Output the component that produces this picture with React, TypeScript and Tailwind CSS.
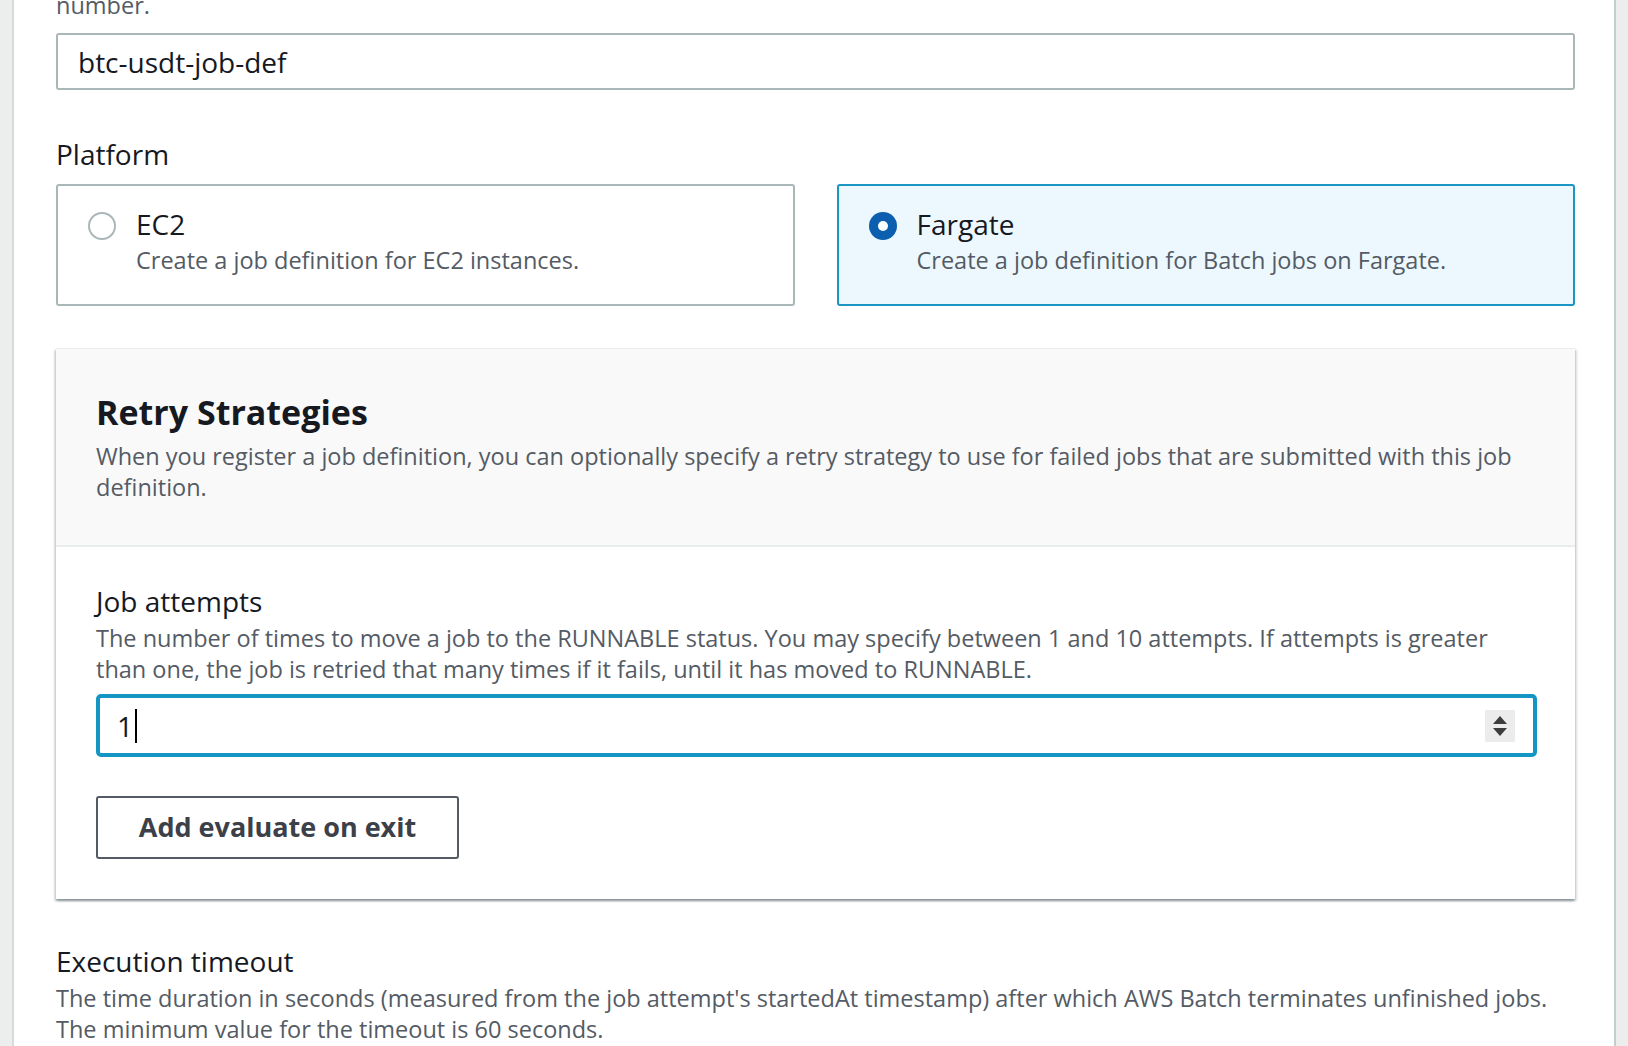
const font = { fontFamily: '"Open Sans", "Noto Sans", sans-serif' }

function Radio({ checked }: { checked: boolean }) {
  if (checked) {
    return (
      <span className="flex h-[28px] w-[28px] shrink-0 items-center justify-center rounded-full bg-[#0b5fae]">
        <span className="block h-[10px] w-[10px] rounded-full bg-white" />
      </span>
    )
  }
  return <span className="block h-[28px] w-[28px] shrink-0 rounded-full border-2 border-[#aab7b8] bg-white" />
}

function PlatformCard({ title, desc, checked }: { title: string; desc: string; checked: boolean }) {
  return (
    <div
      className={
        checked
          ? "flex h-[122px] flex-1 items-start gap-[20px] rounded-[3px] border-2 border-[#1a95c4] bg-[#edf8fe] pl-[30px] pt-[20px]"
          : "flex h-[122px] flex-1 items-start gap-[20px] rounded-[3px] border-2 border-[#aab7b8] bg-white pl-[30px] pt-[20px]"
      }
    >
      <div className="pt-[6px]">
        <Radio checked={checked} />
      </div>
      <div>
        <div className="mb-[3px] text-[28px] leading-[36px] text-[#16191f]">{title}</div>
        <div className="text-[23.5px] leading-[31px] text-[#545b64]">{desc}</div>
      </div>
    </div>
  )
}

export default function App() {
  return (
    <div className="flex h-[1046px] overflow-hidden bg-white" style={font}>
      <div className="w-[14px] shrink-0 border-r-2 border-[#d5dbdb] bg-[#eceeee]" />

      <div className="flex-1 pl-[42px] pr-[39px]">
        <div className="mt-[-10px] text-[23.5px] leading-[31px] text-[#545b64]">number.</div>

        <div className="mt-[12px] flex h-[57px] items-center rounded-[3px] border-2 border-[#aab7b8] pl-[20px] text-[28px] text-[#16191f]">
          btc-usdt-job-def
        </div>

        <div className="mt-[46px] text-[28px] leading-[36px] text-[#16191f]">Platform</div>

        <div className="mt-[12px] flex gap-[42px]">
          <PlatformCard title="EC2" desc="Create a job definition for EC2 instances." checked={false} />
          <PlatformCard title="Fargate" desc="Create a job definition for Batch jobs on Fargate." checked={true} />
        </div>

        <div className="mt-[42px] border-t border-[#eaeded] bg-white shadow-[0_2px_2px_0_rgba(0,28,36,0.3),2px_2px_2px_0_rgba(0,28,36,0.12),-2px_2px_2px_0_rgba(0,28,36,0.12)]">
          <div className="border-b-2 border-[#eaeded] bg-[#f9f9f9] px-[40px] pb-[42px] pt-[42px]">
            <h2 className="text-[34px] font-bold leading-[42px] text-[#16191f]">Retry Strategies</h2>
            <p className="mt-[8px] text-[23.5px] leading-[31px] text-[#545b64]">
              When you register a job definition, you can optionally specify a retry strategy to use for failed jobs that are submitted with this job definition.
            </p>
          </div>

          <div className="px-[40px] pb-[40px] pt-[36px]">
            <div className="text-[28px] leading-[36px] text-[#16191f]">Job attempts</div>
            <p className="mt-[4px] text-[23.5px] leading-[31px] text-[#545b64]">
              The number of times to move a job to the RUNNABLE status. You may specify between 1 and 10 attempts. If attempts is greater than one, the job is retried that many times if it fails, until it has moved to RUNNABLE.
            </p>

            <div className="mr-[-2px] mt-[9px] flex h-[63px] items-center rounded-[5px] border-4 border-[#1496c4] pl-[17px] pr-[18px]">
              <span className="text-[28px] text-[#16191f]">1</span>
              <span className="ml-[2px] h-[34px] w-[2px] bg-black" />
              <div className="ml-auto flex h-[32px] w-[30px] flex-col items-center justify-center gap-[4px] bg-[#ececec]">
                <svg width="14" height="8" viewBox="0 0 14 8">
                  <path d="M7 0 L14 8 L0 8 Z" fill="#3d3d3d" />
                </svg>
                <svg width="14" height="8" viewBox="0 0 14 8">
                  <path d="M0 0 L14 0 L7 8 Z" fill="#3d3d3d" />
                </svg>
              </div>
            </div>

            <button className="mt-[39px] flex h-[63px] w-[363px] items-center justify-center rounded-[3px] border-2 border-[#545b64] bg-white text-[27px] font-bold text-[#3b4049]">
              Add evaluate on exit
            </button>
          </div>
        </div>

        <div className="mt-[44px] text-[28px] leading-[36px] text-[#16191f]">Execution timeout</div>
        <p className="mt-[4px] text-[23.5px] leading-[31px] text-[#545b64]">
          The time duration in seconds (measured from the job attempt's startedAt timestamp) after which AWS Batch terminates unfinished jobs. The minimum value for the timeout is 60 seconds.
        </p>
      </div>

      <div className="w-[14px] shrink-0 border-l-2 border-[#c5cdcd] bg-[#eceeee]" />
    </div>
  )
}
